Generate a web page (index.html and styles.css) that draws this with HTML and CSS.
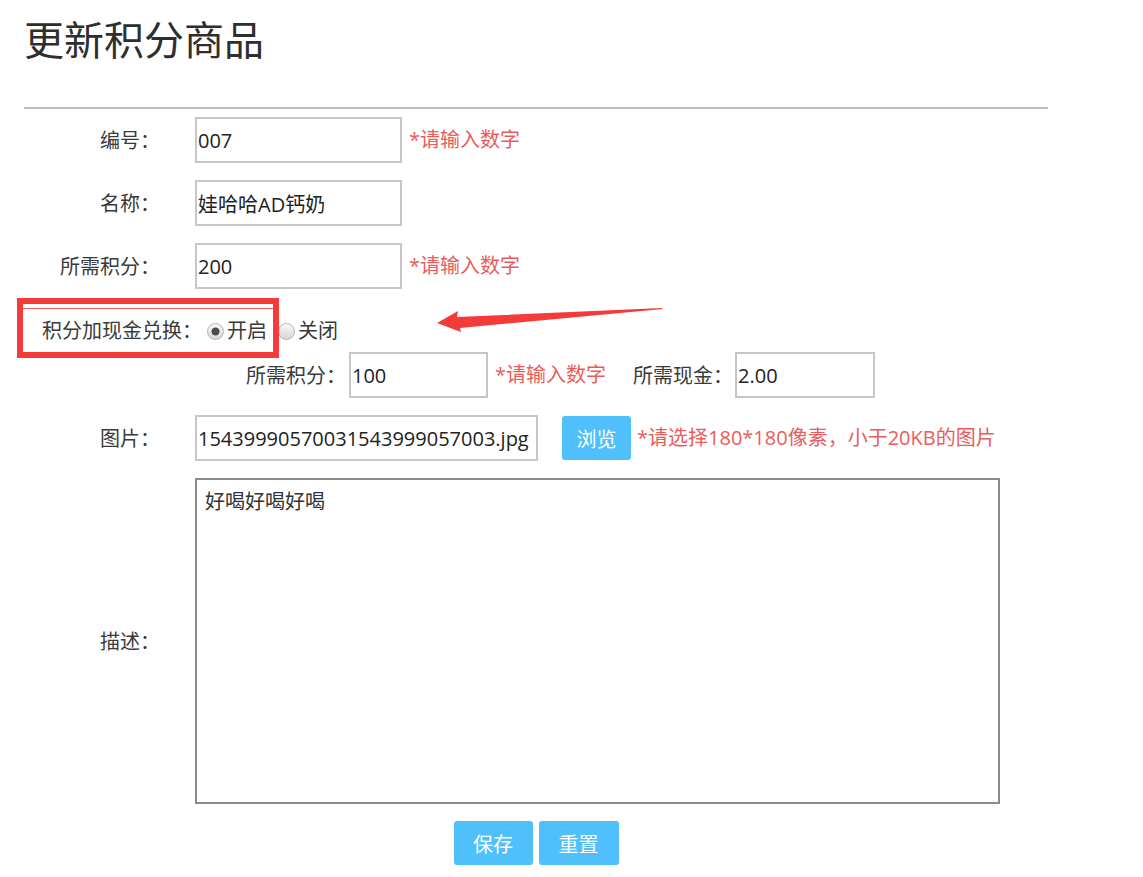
FILE: index.html
```html
<!DOCTYPE html>
<html lang="zh-CN">
<head>
<meta charset="utf-8">
<title>更新积分商品</title>
<link rel="stylesheet" href="styles.css">
</head>
<body>
<div class="page">
  <h1 class="title">更新积分商品</h1>
  <hr class="rule">
  <form class="form">
    <div class="row r-first">
      <span class="label">编号：</span>
      <div class="field">
        <input class="text w-short" type="text" value="007">
        <span class="hint">*请输入数字</span>
      </div>
    </div>
    <div class="row">
      <span class="label">名称：</span>
      <div class="field">
        <input class="text w-short" type="text" value="娃哈哈AD钙奶">
      </div>
    </div>
    <div class="row">
      <span class="label">所需积分：</span>
      <div class="field">
        <input class="text w-short" type="text" value="200">
        <span class="hint">*请输入数字</span>
      </div>
    </div>
    <div class="row r-radio">
      <span class="radio-label">积分加现金兑换：</span>
      <label class="opt"><input class="radio" type="radio" name="mix" checked>开启</label>
      <label class="opt opt-second"><input class="radio" type="radio" name="mix">关闭</label>
    </div>
    <div class="row r-sub">
      <div class="sub">
        <span class="sub-label">所需积分：</span>
        <input class="text w-mini" type="text" value="100">
        <span class="hint">*请输入数字</span>
        <span class="sub-label sub-label-2">所需现金：</span>
        <input class="text w-mini2" type="text" value="2.00">
      </div>
    </div>
    <div class="row r-pic">
      <span class="label">图片：</span>
      <div class="field">
        <input class="text w-file" type="text" value="15439990570031543999057003.jpg">
        <button class="btn btn-browse" type="button">浏览</button>
        <span class="hint hint-pic">*请选择180*180像素，小于20KB的图片</span>
      </div>
    </div>
    <div class="row r-desc">
      <span class="label">描述：</span>
      <div class="field">
        <textarea class="area">好喝好喝好喝</textarea>
      </div>
    </div>
    <div class="actions">
      <button class="btn btn-act" type="button">保存</button>
      <button class="btn btn-act btn-act2" type="button">重置</button>
    </div>
  </form>

  <div class="callout"></div>
  <svg class="arrow" width="240" height="40" viewBox="430 300 240 40">
    <polygon points="437,323 458,311 457,317 662,308 663,309 460,328 461,332" fill="#f53a3a"/>
  </svg>
</div>
</body>
</html>
```

FILE: styles.css
```css
html, body {
  margin: 0;
  padding: 0;
  background: #ffffff;
}

body {
  font-family: "Open Sans", "Noto Sans CJK SC", sans-serif;
  color: #333333;
}

.page {
  position: relative;
  width: 1024px;
  padding-left: 24px;
  padding-top: 18px;
}

.title {
  margin: 0;
  font-family: "Noto Sans CJK SC", sans-serif;
  font-size: 40px;
  line-height: 40px;
  font-weight: 400;
  color: #2e2e2e;
}

.rule {
  margin: 49px 0 0 0;
  border: 0;
  border-top: 2px solid #bdbdbd;
  height: 0;
}

.form {
  padding-top: 8px;
}

.row {
  display: flex;
  align-items: center;
  height: 46px;
  margin-top: 17px;
}

.r-first {
  margin-top: 0;
}

.label {
  width: 136px;
  text-align: right;
  font-family: "Noto Sans CJK SC", sans-serif;
  font-size: 20px;
  line-height: 24px;
  color: #3a3a3a;
  flex: none;
}

.field {
  display: flex;
  align-items: center;
  margin-left: 35px;
}

.text {
  box-sizing: border-box;
  height: 46px;
  border: 2px solid #c6c6c6;
  padding: 0 0 0 1px;
  margin: 0;
  font-family: "Open Sans", "Noto Sans CJK SC", sans-serif;
  font-size: 20px;
  color: #222222;
  background: #ffffff;
  outline: none;
}

.w-short { width: 207px; }
.w-mini { width: 139px; }
.w-mini2 { width: 140px; }
.w-file { width: 343px; }

.hint {
  margin-left: 7px;
  font-family: "Open Sans", "Noto Sans CJK SC", sans-serif;
  font-size: 20px;
  line-height: 24px;
  color: #ea5c5c;
  white-space: nowrap;
}

.hint-pic {
  margin-left: 6px;
}

/* radio row */
.r-radio {
  height: 44px;
  margin-top: 19px;
  padding-left: 18px;
  font-family: "Noto Sans CJK SC", sans-serif;
  font-size: 20px;
  color: #3a3a3a;
}

.radio-label {
  line-height: 24px;
}

.opt {
  display: flex;
  align-items: center;
  line-height: 24px;
}

.opt-second {
  margin-left: 6px;
}

.radio {
  appearance: none;
  -webkit-appearance: none;
  box-sizing: border-box;
  width: 17px;
  height: 17px;
  margin: 2px 3px 0 5px;
  border: 1px solid #b4b4b4;
  border-radius: 50%;
  background: linear-gradient(#f8f8f8, #d6d6d6);
}

.radio:checked {
  background:
    radial-gradient(circle, #4d4d4d 0 3.6px, transparent 4.4px),
    linear-gradient(#f8f8f8, #d6d6d6);
}

/* sub row */
.r-sub {
  margin-top: 0;
}

.sub {
  display: flex;
  align-items: center;
  margin-left: 222px;
}

.sub-label {
  font-family: "Noto Sans CJK SC", sans-serif;
  font-size: 20px;
  line-height: 24px;
  color: #3a3a3a;
  margin-right: 3px;
}

.sub-label-2 {
  margin-left: 27px;
  margin-right: 2px;
}

/* picture row */
.btn {
  border: 0;
  border-radius: 3px;
  background: #4fc0fb;
  color: #ffffff;
  font-family: "Noto Sans CJK SC", sans-serif;
  font-size: 20px;
  padding: 0;
  cursor: pointer;
}

.btn-browse {
  width: 69px;
  height: 44px;
  margin-left: 24px;
}

/* description */
.r-desc {
  height: 326px;
}

.area {
  box-sizing: border-box;
  width: 805px;
  height: 326px;
  margin: 0;
  border: 2px solid #8c8c8c;
  padding: 8px 8px;
  resize: none;
  font-family: "Noto Sans CJK SC", sans-serif;
  font-size: 20px;
  line-height: 26px;
  color: #333333;
  outline: none;
}

/* actions */
.actions {
  display: flex;
  justify-content: center;
  margin-top: 17px;
  gap: 6px;
}

.btn-act {
  width: 79px;
  height: 44px;
}

.btn-act2 {
  width: 80px;
}

/* annotations */
.callout {
  position: absolute;
  left: 17px;
  top: 298px;
  width: 250px;
  height: 48px;
  border: 6px solid #f53a3a;
}

.callout::after {
  content: "";
  position: absolute;
  left: 0;
  right: 0;
  top: 4px;
  border-top: 1px solid #f26060;
}

.arrow {
  position: absolute;
  left: 430px;
  top: 300px;
}
```
